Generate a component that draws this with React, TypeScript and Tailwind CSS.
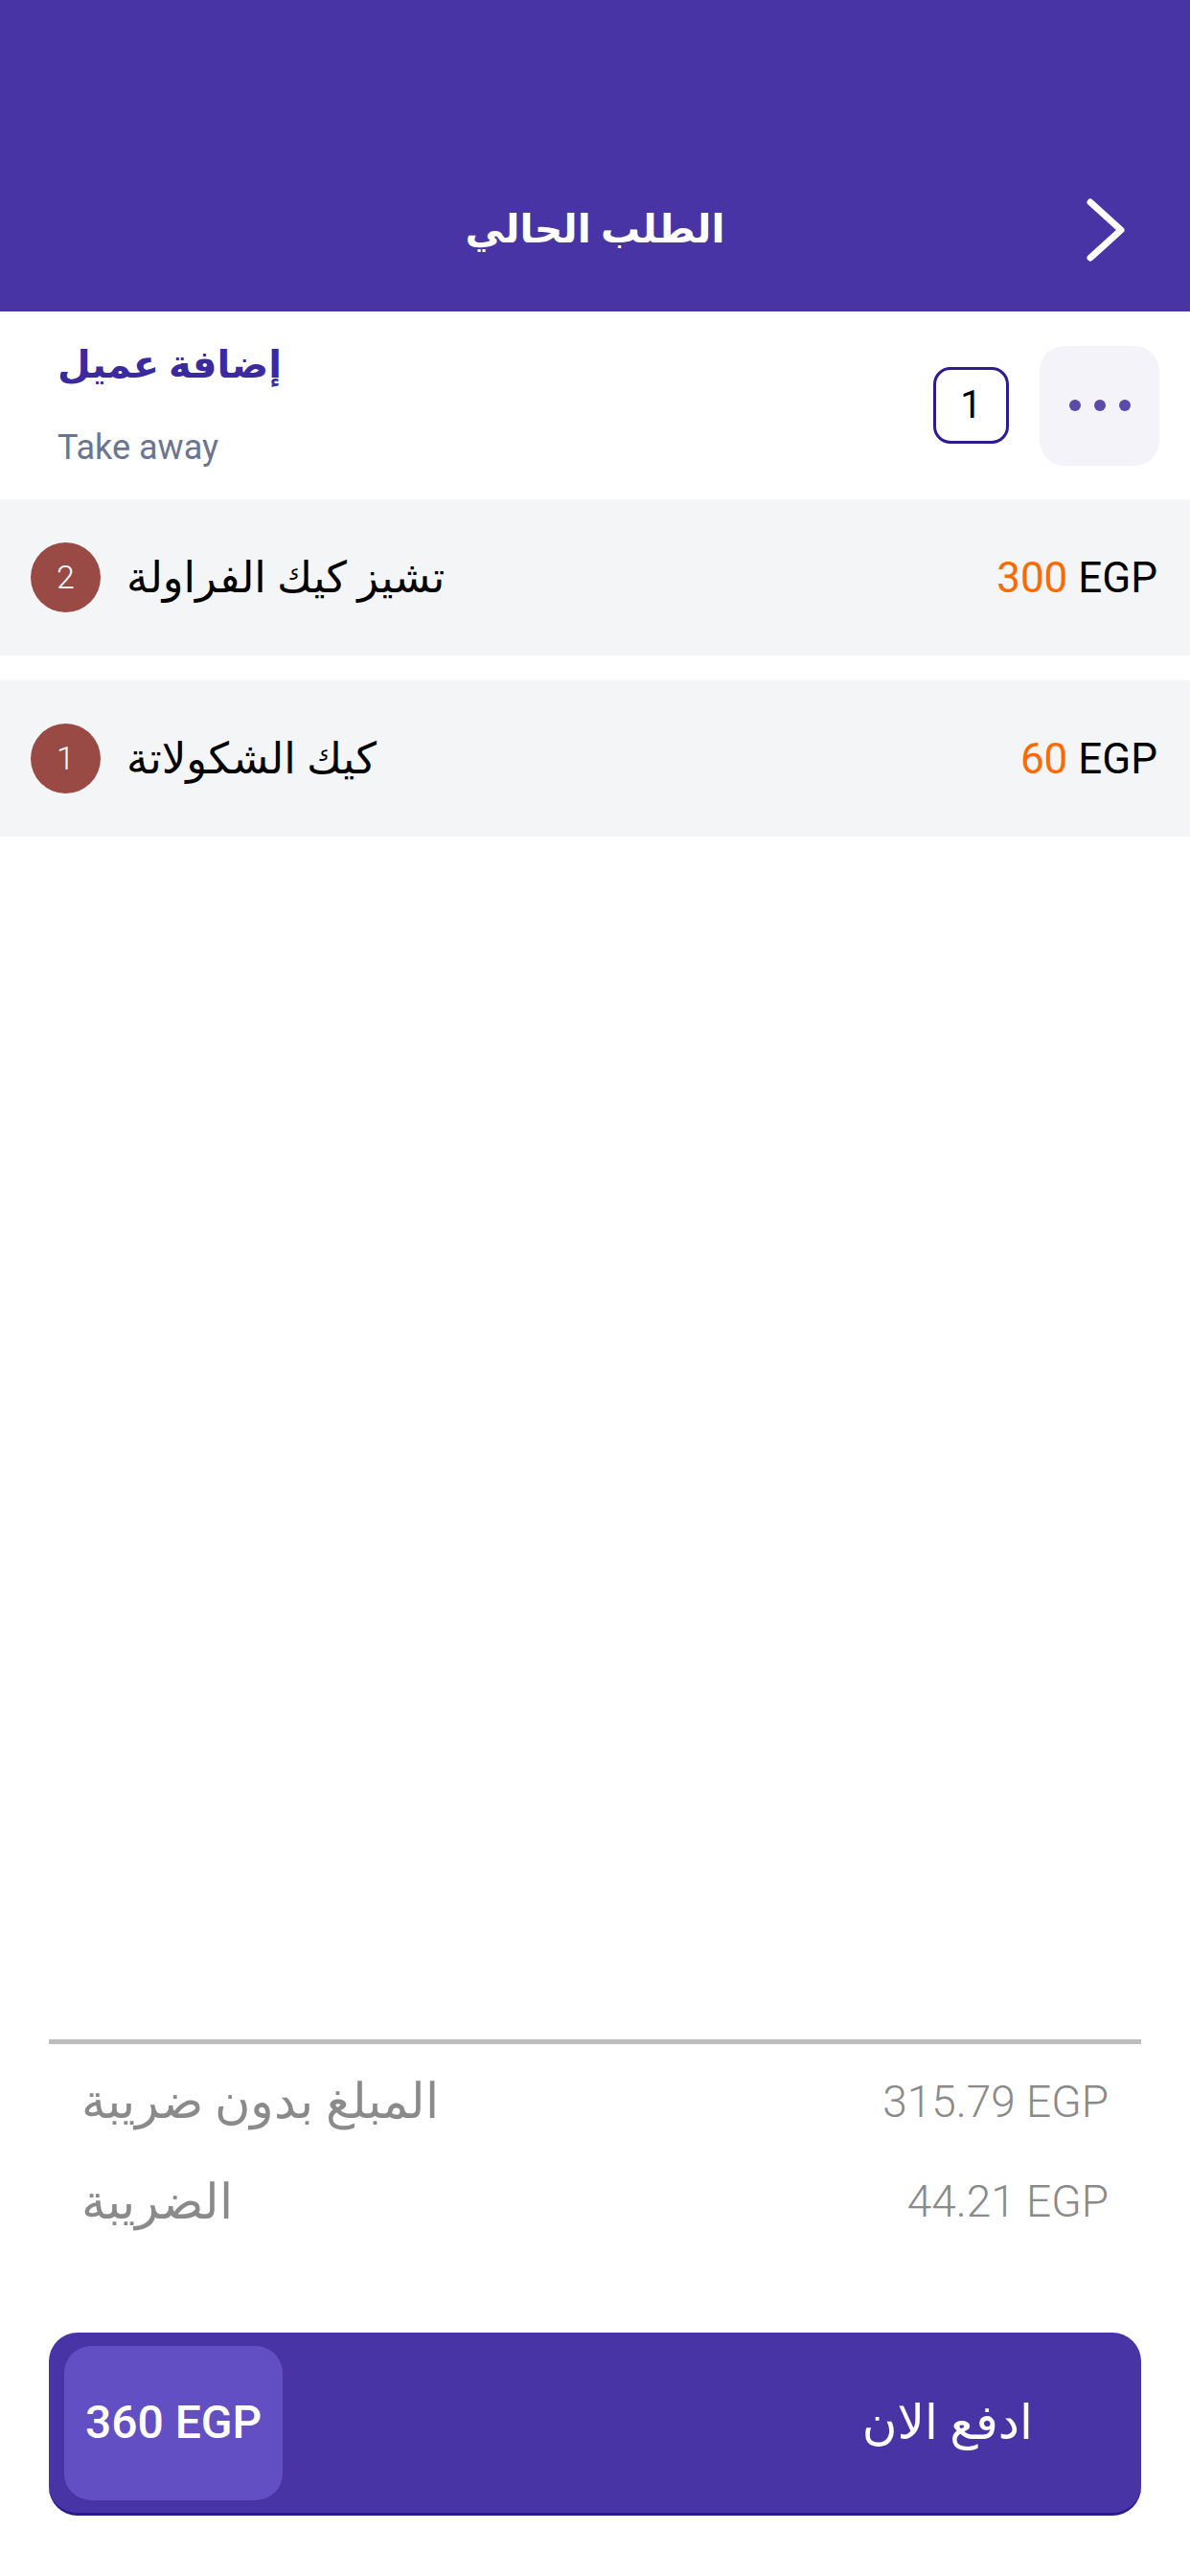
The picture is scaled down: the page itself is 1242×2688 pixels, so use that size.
type Item = { qty: number; name: string; price: number };

const items: Item[] = [
  { qty: 2, name: "تشيز كيك الفراولة", price: 300 },
  { qty: 1, name: "كيك الشكولاتة", price: 60 },
];

const font = "font-['Roboto','DejaVu_Sans',sans-serif]";

function ItemRow({ item }: { item: Item }) {
  return (
    <div className="flex h-[163px] items-center bg-[#f4f5f7] pl-[32px] pr-[34px]">
      <div className="grid h-[73px] w-[73px] place-items-center rounded-full bg-[#9a4a45] text-[34px] font-light text-white">
        {item.qty}
      </div>
      <div className="ml-[27px] text-[45px] text-black" dir="rtl">
        {item.name}
      </div>
      <div className="ml-auto text-[44px] text-black">
        <span className="text-[#ff6a00]">{item.price}</span> EGP
      </div>
    </div>
  );
}

export default function App() {
  return (
    <div className={`flex min-h-[2688px] flex-col bg-white ${font}`}>
      <header className="flex h-[325px] items-end bg-[#4834a4] pb-[45px]">
        <div className="relative flex h-[80px] w-full items-center justify-center">
          <h1 className="text-[41px] font-bold text-white" dir="rtl">
            الطلب الحالي
          </h1>
          <svg className="absolute right-[66px]" width="44" height="68" viewBox="0 0 44 68" fill="none">
            <polyline
              points="6,5 38,34 6,63"
              stroke="white"
              strokeWidth="7"
              strokeLinecap="round"
              strokeLinejoin="round"
            />
          </svg>
        </div>
      </header>

      <section className="flex h-[196px] items-center pl-[60px] pr-[32px]">
        <div className="flex flex-col gap-[48px]">
          <div className="text-[40px] font-bold leading-none text-[#3a2a9e]" dir="rtl">
            إضافة عميل
          </div>
          <div className="text-[36px] leading-none text-[#6b7592]">Take away</div>
        </div>
        <div className="ml-auto grid h-[80px] w-[79px] place-items-center rounded-[18px] border-[3px] border-[#2d1b8f] text-[40px] text-black">
          1
        </div>
        <button className="ml-[32px] flex h-[125px] w-[125px] items-center justify-center gap-[14px] rounded-[26px] bg-[#f4f3fa]">
          <span className="h-[12px] w-[12px] rounded-full bg-[#5b4aa8]" />
          <span className="h-[12px] w-[12px] rounded-full bg-[#5b4aa8]" />
          <span className="h-[12px] w-[12px] rounded-full bg-[#5b4aa8]" />
        </button>
      </section>

      <div className="flex flex-col gap-[26px]">
        {items.map((it) => (
          <ItemRow key={it.name} item={it} />
        ))}
      </div>

      <div className="flex-1" />

      <div className="px-[51px]">
        <div className="h-[5px] bg-[#bdbdbd]" />
        <div className="flex flex-col gap-[28px] px-[34px] pt-[22px] text-[46px] font-light text-[#8a8a8a]">
          <div className="flex items-center justify-between">
            <span className="text-[51px]" dir="rtl">المبلغ بدون ضريبة</span>
            <span>315.79 EGP</span>
          </div>
          <div className="flex items-center justify-between">
            <span className="text-[51px]" dir="rtl">الضريبة</span>
            <span>44.21 EGP</span>
          </div>
        </div>

        <button className="mb-[63px] mt-[98px] flex h-[191px] w-full items-center rounded-[30px] border-b-[3px] border-[#2a1a90] bg-[#4834a4] pl-[16px] pr-[113px]">
          <span className="grid h-[161px] w-[228px] place-items-center rounded-[28px] bg-[#624fc4] text-[48px] font-medium text-white">
            360 EGP
          </span>
          <span className="ml-auto text-[50px] font-medium text-white" dir="rtl">
            ادفع الان
          </span>
        </button>
      </div>
    </div>
  );
}
